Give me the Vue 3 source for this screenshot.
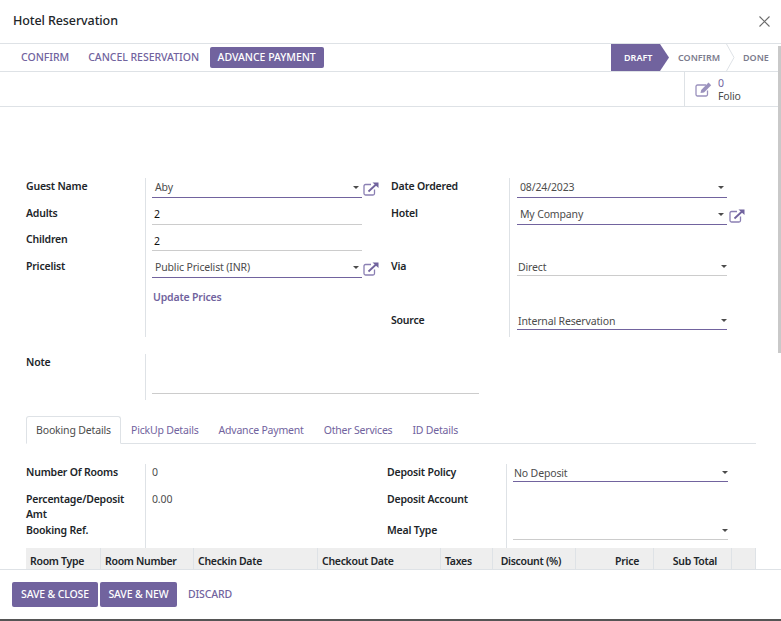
<script setup>
const tabs = ['Booking Details', 'PickUp Details', 'Advance Payment', 'Other Services', 'ID Details']
const cols = [
  { label: 'Room Type', w: 75 },
  { label: 'Room Number', w: 93 },
  { label: 'Checkin Date', w: 124 },
  { label: 'Checkout Date', w: 123 },
  { label: 'Taxes', w: 52 },
  { label: 'Discount (%)', w: 83, right: true },
  { label: 'Price', w: 78, right: true },
  { label: 'Sub Total', w: 78, right: true },
  { label: '', w: 24 },
]
</script>

<template>
  <div class="modal">
    <header class="head">
      <h4>Hotel Reservation</h4>
      <svg class="close" width="11" height="11" viewBox="0 0 11 11"><path d="M.5.500l10 10M10.500.500l-10 10" stroke="#6b6b6b" stroke-width="1.100" fill="none"/></svg>
    </header>

    <div class="status">
      <div class="actions">
        <button class="link">CONFIRM</button>
        <button class="link">CANCEL RESERVATION</button>
        <button class="primary">ADVANCE PAYMENT</button>
      </div>
      <div class="steps">
        <span class="step current">DRAFT</span>
        <span class="step s2">CONFIRM
          <svg class="chev" width="9" height="27" viewBox="0 0 9 27"><path d="M.5 0L8 13.500L.5 27" fill="none" stroke="#dee2e6"/></svg>
        </span>
        <span class="step s3">DONE</span>
      </div>
    </div>

    <div class="stats">
      <div class="stat">
        <svg width="18" height="15" viewBox="0 0 18 15" fill="none"><path d="M12.500 8.500V12.500A1.500 1.500 0 0 1 11 14H2.500A1.500 1.500 0 0 1 1 12.500V4.500A1.500 1.500 0 0 1 2.500 3H11" stroke="#9a91bd" stroke-width="1.300"/><path d="M5.500 11l.7-3L13.500.6l2.700 2.700L9 10.500z" fill="#9a91bd"/></svg>
        <div class="stat-text"><span class="num">0</span><span>Folio</span></div>
      </div>
    </div>

    <main class="sheet">
      <section class="group-row top">
        <div class="group left">
          <label class="r27">Guest Name</label>
          <div class="val r27"><div class="field sel active"><span>Aby</span><i class="caret"></i></div><svg class="ext" viewBox="0 0 16 14" width="16" height="14"><use href="#ext" /></svg></div>
          <label class="r27">Adults</label>
          <div class="val r27"><div class="field plain dark">2</div></div>
          <label class="r26 tight">Children</label>
          <div class="val r26"><div class="field plain dark short">2</div></div>
          <label class="r27">Pricelist</label>
          <div class="val r27"><div class="field sel active"><span>Public Pricelist (INR)</span><i class="caret"></i></div><svg class="ext" viewBox="0 0 16 14" width="16" height="14"><use href="#ext" /></svg></div>
          <label class="r52"></label>
          <div class="val r52"><a class="update">Update Prices</a></div>
        </div>
        <div class="group right">
          <label class="r27">Date Ordered</label>
          <div class="val r27"><div class="field sel active"><span>08/24/2023</span><i class="caret"></i></div></div>
          <label class="r53">Hotel</label>
          <div class="val r53"><div class="field sel active"><span>My Company</span><i class="caret"></i></div><svg class="ext" viewBox="0 0 16 14" width="16" height="14"><use href="#ext" /></svg></div>
          <label class="r54">Via</label>
          <div class="val r54"><div class="field sel wide"><span>Direct</span><i class="caret"></i></div></div>
          <label class="r25">Source</label>
          <div class="val r25"><div class="field sel wide active"><span>Internal Reservation</span><i class="caret"></i></div></div>
        </div>
      </section>

      <section class="note">
        <label>Note</label>
        <div class="note-val"><div class="note-line"></div></div>
      </section>

      <nav class="tabs">
        <a v-for="(t, i) in tabs" :key="t" class="tab" :class="{ on: i === 0 }">{{ t }}</a>
      </nav>

      <section class="details">
        <div class="group d-left">
          <label class="d1">Number Of Rooms</label>
          <div class="val d1 txt">0</div>
          <label class="d2">Percentage/Deposit Amt</label>
          <div class="val d2 txt">0.00</div>
          <label class="d3">Booking Ref.</label>
          <div class="val d3"></div>
        </div>
        <div class="group d-right">
          <label class="d1">Deposit Policy</label>
          <div class="val d1"><div class="field sel wide dfield active"><span>No Deposit</span><i class="caret"></i></div></div>
          <label class="d2">Deposit Account</label>
          <div class="val d2"></div>
          <label class="d3">Meal Type</label>
          <div class="val d3"><div class="field sel wide dfield"><span></span><i class="caret"></i></div></div>
        </div>
      </section>

      <div class="thead">
        <div v-for="c in cols" :key="c.label" class="th" :class="{ r: c.right }" :style="{ width: c.w + 'px' }">{{ c.label }}</div>
      </div>
    </main>

    <footer class="foot">
      <button class="primary big">SAVE &amp; CLOSE</button>
      <button class="primary big">SAVE &amp; NEW</button>
      <button class="link discard">DISCARD</button>
    </footer>

    <div class="scrollbar"></div>

    <svg width="0" height="0" class="defs">
      <symbol id="ext" viewBox="0 0 16 14">
        <path d="M8 2.500H2.500A1.500 1.500 0 0 0 1 4V11.500A1.500 1.500 0 0 0 2.500 13H10A1.500 1.500 0 0 0 11.500 11.500V7.500" fill="none" stroke="#8a7fb3" stroke-width="1.300"/>
        <path d="M5.500 9.500L13 2.500" fill="none" stroke="#71639e" stroke-width="1.800"/>
        <path d="M9.500 .5H15.500V6z" fill="#71639e"/>
      </symbol>
    </svg>
  </div>
</template>

<style>
html, body { margin: 0; background: #fff; }
</style>

<style scoped>
.modal {
  width: 781px;
  height: 621px;
  box-sizing: border-box;
  display: flex;
  flex-direction: column;
  overflow: hidden;
  position: relative;
  font-family: "Noto Sans", "Open Sans", sans-serif;
  font-size: 10.500px;
  letter-spacing: -0.15px;
  color: #4c4c4c;
  background: #fff;
  border-bottom: 2px solid #555;
}
.defs { position: absolute; }
.scrollbar { position: absolute; top: 46px; right: 0; width: 3px; height: 307px; background: #c9c9c9; }
.head {
  flex: none;
  display: flex;
  align-items: center;
  justify-content: space-between;
  padding: 0 11px 2px 13px;
  height: 41px;
  border-bottom: 1px solid #dee2e6;
}
h4 { margin: 0; font-size: 12.500px; font-weight: 500; color: #212529; letter-spacing: -0.1px; }
.close { margin-top: 2px; }
.status {
  height: 27px;
  flex: none;
  display: flex;
  justify-content: space-between;
  border-bottom: 1px solid #dee2e6;
}
.actions { display: flex; align-items: center; padding-left: 11.500px; letter-spacing: -0.03px; }
button { font: inherit; letter-spacing: inherit; border: 0; background: none; cursor: pointer; }
.link { color: #71639e; font-weight: 500; padding: 0 9.500px 1px; }
.primary {
  background: #71639e;
  color: #fff;
  border-radius: 2px;
  height: 21px;
  padding: 0 8px 1px;
  font-weight: 500;
}
.actions .primary { margin-left: 1px; }
.steps { display: flex; height: 27px; margin-right: 3px; }
.step {
  display: flex;
  align-items: center;
  font-size: 9px;
  letter-spacing: 0;
  font-weight: 600;
  color: #7b7b8d;
  position: relative;
}
.current {
  width: 58px;
  padding-left: 13px;
  box-sizing: border-box;
  background: #71639e;
  color: #fff;
  clip-path: polygon(0 0, 49px 0, 58px 50%, 49px 100%, 0 100%);
}
.s2 { width: 66px; padding-left: 9px; box-sizing: border-box; }
.chev { position: absolute; right: 0; top: 0; }
.s3 { width: 43px; box-sizing: border-box; padding-left: 8px; }
.stats {
  height: 34px;
  flex: none;
  display: flex;
  justify-content: flex-end;
  border-bottom: 1px solid #dee2e6;
  padding-right: 3px;
}
.stat {
  width: 94px;
  box-sizing: border-box;
  border-left: 1px solid #dee2e6;
  display: flex;
  align-items: center;
  padding-left: 10px;
  gap: 5px;
}
.stat-text { display: flex; flex-direction: column; line-height: 13px; padding-top: 2px; }
.num { color: #71639e; }
.sheet { flex: 1; min-height: 0; overflow: hidden; position: relative; padding: 71px 0 0 26px; }
.group-row { display: flex; }
.group { display: grid; }
.left { width: 365px; grid-template-columns: 119px 246px; }
.right { width: 360px; grid-template-columns: 118px 1fr; }
.group > label, .note label {
  font-weight: 600;
  color: #212529;
  line-height: 15px;
  padding-top: 1px;
  letter-spacing: -0.2px;
  box-sizing: border-box;
}
.group > label.tight { padding-top: 0; }
.val { border-left: 1px solid #dee2e6; padding-left: 6px; display: flex; align-items: flex-start; min-width: 0; box-sizing: border-box; }
.right .val { padding-left: 7px; }
.r25 { height: 25px; } .r26 { height: 26px; } .r27 { height: 27px; } .r52 { height: 52px; } .r53 { height: 53px; } .r54 { height: 54px; }
.field {
  flex: none;
  width: 210px;
  height: 20px;
  box-sizing: border-box;
  border-bottom: 1px solid #ccc;
  display: flex;
  align-items: flex-start;
  justify-content: space-between;
  line-height: 18px;
}
.short { height: 19px; }
.sel { padding: 0 3px 0 3px; }
.plain { padding: 0 2px; }
.dark { color: #111; }
.active { border-bottom-color: #71639e; }
.wide { padding: 0 0 0 1px; height: 18px; }
.dfield { width: 215px; }
.caret { width: 0; height: 0; margin-top: 8px; border-left: 3.500px solid transparent; border-right: 3.500px solid transparent; border-top: 3.500px solid #4c4c4c; }
.wide .caret { margin-top: 7px; }
.ext { margin: 4px 0 0 1px; flex: none; }
.right .ext { margin-left: 2px; }
.update { color: #71639e; font-weight: 600; margin: 4px 0 0 1px; line-height: 16px; letter-spacing: -0.18px; }
.note { display: grid; grid-template-columns: 119px 1fr; margin-top: 17px; }
.note-val { border-left: 1px solid #dee2e6; height: 46px; padding-left: 6px; }
.note-line { width: 327px; height: 40px; border-bottom: 1px solid #ccc; box-sizing: border-box; }
.tabs { display: flex; width: 730px; margin-top: 16px; height: 28px; box-sizing: border-box; border-bottom: 1px solid #dee2e6; }
.tab { color: #71639e; padding: 0 10px; line-height: 28px; height: 28px; box-sizing: border-box; letter-spacing: -0.2px; }
.on { color: #4c4c4c; border: 1px solid #dee2e6; border-bottom-color: #fff; border-radius: 3px 3px 0 0; padding: 0 9px; line-height: 26px; letter-spacing: -0.15px; }
.details { display: flex; margin-top: 20px; }
.d-left { width: 361px; grid-template-columns: 119px 242px; }
.d-right { width: 341px; grid-template-columns: 119px 222px; }
.d1 { height: 27px; } .d2 { height: 31px; } .d3 { height: 26px; }
.txt { line-height: 16px; }
.thead { display: flex; width: 730px; height: 24px; background: #eee; }
.th {
  box-sizing: border-box;
  flex: none;
  border-right: 1px solid #dee2e6;
  padding: 6px 3px 0 4px;
  font-weight: 600;
  color: #212529;
  white-space: nowrap;
  line-height: 15px;
  letter-spacing: -0.3px;
}
.th.r { text-align: right; padding-right: 14px; }
.foot {
  height: 50px;
  flex: none;
  box-sizing: border-box;
  border-top: 1px solid #dee2e6;
  background: #fff;
  display: flex;
  align-items: center;
  gap: 2px;
  padding: 0 0 0 12px;
}
.big { height: 25px; width: 86px; padding: 0 0 1px; }
.big + .big { width: 77px; }
.discard { margin-left: 0; padding: 0 9px 1px; }
</style>
